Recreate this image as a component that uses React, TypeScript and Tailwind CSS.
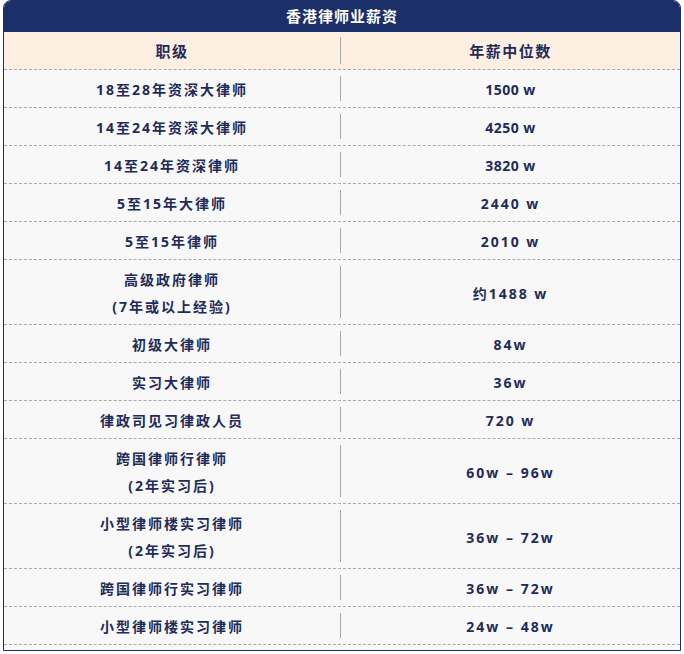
import React from 'react'

type Row = { left: string[]; right: string; tight?: boolean }

const rows: Row[] = [
  { left: ['18至28年资深大律师'], right: '1500 w', tight: true },
  { left: ['14至24年资深大律师'], right: '4250 w', tight: true },
  { left: ['14至24年资深律师'], right: '3820 w', tight: true },
  { left: ['5至15年大律师'], right: '2440 w' },
  { left: ['5至15年律师'], right: '2010 w' },
  { left: ['高级政府律师', '(7年或以上经验)'], right: '约1488 w' },
  { left: ['初级大律师'], right: '84w' },
  { left: ['实习大律师'], right: '36w' },
  { left: ['律政司见习律政人员'], right: '720 w' },
  { left: ['跨国律师行律师', '(2年实习后)'], right: '60w – 96w' },
  { left: ['小型律师楼实习律师', '(2年实习后)'], right: '36w – 72w' },
  { left: ['跨国律师行实习律师'], right: '36w – 72w' },
  { left: ['小型律师楼实习律师'], right: '24w – 48w' },
]

const font = { fontFamily: '"Open Sans", "Noto Sans CJK SC", sans-serif' }

function TableRow({ row }: { row: Row }) {
  const twoLine = row.left.length > 1
  return (
    <div className={`flex border-b border-dashed border-[#aaaaaa] ${twoLine ? 'h-[65px]' : 'h-[38px]'}`}>
      <div className="w-[336px] pt-[2px] flex flex-col items-center justify-center">
        {row.left.map((t, i) => (
          <div key={i} className="text-[14px] leading-[27px] font-bold tracking-[2px] text-[#1f2b5b]">
            {t}
          </div>
        ))}
      </div>
      <div className="w-px bg-[#a8a8a8] my-[6px]" />
      <div className="flex-1 pt-[2px] flex items-center justify-center">
        <span className={`text-[14px] font-bold text-[#1f2b5b] ${row.tight ? 'tracking-[0.5px]' : 'tracking-[2px]'}`}>
          {row.right}
        </span>
      </div>
    </div>
  )
}

export default function App() {
  return (
    <div className="w-[684px] h-[654px] bg-white" style={font}>
      <div className="mx-[3px] border border-[#1b2f66] rounded-t-[8px] overflow-hidden bg-[#f8f8f8] pb-[5px]">
        {/* title */}
        <div className="h-[31px] bg-[#1b3068] flex items-center justify-center">
          <span className="text-white text-[15px] font-bold tracking-[1px]">香港律师业薪资</span>
        </div>

        {/* column header */}
        <div className="flex h-[38px] bg-[#fdefe2] border-b border-dashed border-[#aaaaaa]">
          <div className="w-[336px] pt-[1px] flex items-center justify-center">
            <span className="text-[15px] font-bold tracking-[1.5px] text-[#1f2b5b]">职级</span>
          </div>
          <div className="w-px bg-[#a8a8a8] my-[5px]" />
          <div className="flex-1 pt-[1px] flex items-center justify-center">
            <span className="text-[15px] font-bold tracking-[1.5px] text-[#1f2b5b]">年薪中位数</span>
          </div>
        </div>

        {rows.map((r, i) => (
          <TableRow key={i} row={r} />
        ))}
      </div>
    </div>
  )
}
